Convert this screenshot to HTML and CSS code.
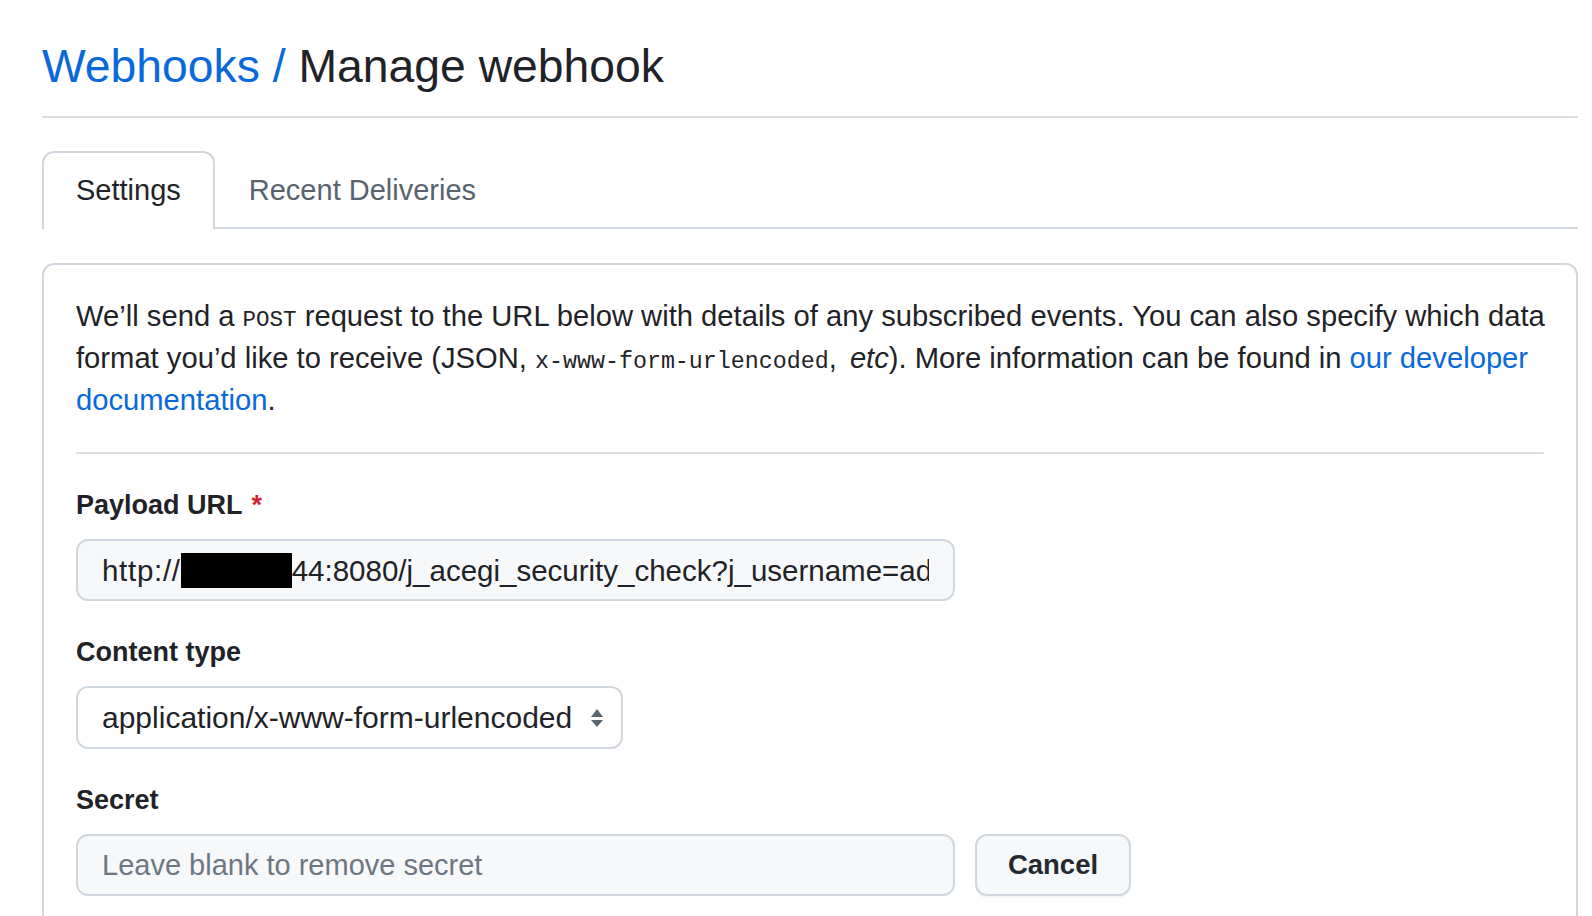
FILE: index.html
```html
<!DOCTYPE html>
<html lang="en">
<head>
<meta charset="utf-8">
<title>Manage webhook</title>
<link rel="stylesheet" href="styles.css">
</head>
<body>
<div class="page">
  <div class="subhead">
    <h1 class="subhead-heading"><a class="crumb" href="#">Webhooks /</a> Manage webhook</h1>
  </div>

  <nav class="tabnav">
    <a class="tab tab-selected" href="#">Settings</a>
    <a class="tab" href="#">Recent Deliveries</a>
  </nav>

  <div class="box">
    <p class="intro">We’ll send a <code>POST</code> request to the URL below with details of any subscribed events. You can also specify which data format you’d like to receive (JSON, <code class="code-wide">x-www-form-urlencoded</code>,<span class="gap"> </span><em>etc</em>). More information can be found in <a class="link" href="#">our developer documentation</a>.</p>

    <hr class="divider">

    <div class="form-group">
      <label class="form-label">Payload URL <span class="required">*</span></label>
      <div class="form-control url-control">
        <div class="url-text"><span class="scheme">http://</span><span class="redact"></span>44:8080/j_acegi_security_check?j_username=admin&amp;j_password=admin&amp;from=%2Fscript</div>
      </div>
    </div>

    <div class="form-group">
      <label class="form-label">Content type</label>
      <div class="form-control select-control">
        <span class="select-value">application/x-www-form-urlencoded</span>
        <svg class="select-arrows" width="12" height="18" viewBox="0 0 12 18" aria-hidden="true">
          <path d="M6 0 L12 8 L0 8 Z"></path>
          <path d="M0 11 L12 11 L6 18 Z"></path>
        </svg>
      </div>
    </div>

    <div class="form-group">
      <label class="form-label">Secret</label>
      <div class="secret-row">
        <input class="form-control secret-input" type="password" placeholder="Leave blank to remove secret">
        <button class="btn" type="button">Cancel</button>
      </div>
    </div>
  </div>
</div>
</body>
</html>
```

FILE: styles.css
```css
* {
  box-sizing: border-box;
}

body {
  margin: 0;
  background: #ffffff;
  color: #1f2328;
  font-family: "Liberation Sans", Arial, sans-serif;
}

.page {
  padding: 0 14px 0 42px;
}

.subhead {
  padding: 30px 0 14px;
  border-bottom: 2px solid #d8dee4;
}

.subhead-heading {
  margin: 0;
  font-size: 46.3px;
  line-height: 72px;
  font-weight: 400;
  color: #1f2328;
}

.crumb {
  color: #0969da;
  text-decoration: none;
}

.tabnav {
  display: flex;
  margin-top: 33px;
  border-bottom: 2px solid #d0d7de;
}

.tab {
  display: block;
  padding: 16px 32px 18px;
  margin-bottom: -2px;
  font-size: 29px;
  line-height: 42px;
  color: #59636e;
  text-decoration: none;
  border: 2px solid transparent;
  border-bottom: 0;
  border-radius: 12px 12px 0 0;
}

.tab-selected {
  color: #1f2328;
  background: #ffffff;
  border-color: #d0d7de;
}

.box {
  margin-top: 34px;
  border: 2px solid #d0d7de;
  border-radius: 12px;
  padding: 30px 32px 32px;
}

.intro {
  margin: 0 -16px 0 0;
  font-size: 29.2px;
  line-height: 42px;
}

.intro code {
  font-family: "Liberation Mono", "DejaVu Sans Mono", monospace;
  font-size: 22.5px;
  line-height: 1;
}

.intro .code-wide {
  font-size: 23.3px;
}

.intro .gap {
  padding-right: 5px;
}

.link {
  color: #0969da;
  text-decoration: none;
}

.divider {
  margin: 31px 0 0;
  border: 0;
  height: 2px;
  background: #d8dee4;
}

.form-group {
  margin-top: 31px;
}

.form-label {
  display: block;
  margin-bottom: 14px;
  font-size: 27px;
  line-height: 40px;
  font-weight: 700;
  color: #1f2328;
}

.required {
  color: #d1242f;
  margin-left: 2px;
}

.form-control {
  display: flex;
  align-items: center;
  height: 62px;
  padding: 0 24px;
  border: 2px solid #d0d7de;
  border-radius: 12px;
  background: #f6f8fa;
  color: #1f2328;
  font-family: "Liberation Sans", Arial, sans-serif;
}

.url-control {
  width: 879px;
}

.url-text {
  flex: 1;
  overflow: hidden;
  white-space: nowrap;
  font-size: 29.5px;
  line-height: 35px;
}

.scheme {
  letter-spacing: 0.7px;
}

.redact {
  display: inline-block;
  width: 111px;
  height: 35px;
  background: #000000;
  vertical-align: top;
}

.select-control {
  width: 547px;
  height: 63px;
  padding: 0 18px 0 24px;
  justify-content: space-between;
  background: #ffffff;
}

.select-value {
  font-size: 30px;
  line-height: 35px;
}

.select-arrows {
  fill: #59636e;
  flex: none;
}

.secret-row {
  display: flex;
  gap: 20px;
}

.secret-input {
  width: 879px;
  font-size: 29px;
  outline: none;
}

.secret-input::placeholder {
  color: #6e7781;
}

.btn {
  width: 156px;
  height: 62px;
  border: 2px solid #d0d7de;
  border-radius: 12px;
  background: #f6f8fa;
  box-shadow: 0 2px 0 rgba(31, 35, 40, 0.04);
  color: #24292f;
  font-family: "Liberation Sans", Arial, sans-serif;
  font-size: 27.5px;
  font-weight: 700;
  cursor: pointer;
}
```
